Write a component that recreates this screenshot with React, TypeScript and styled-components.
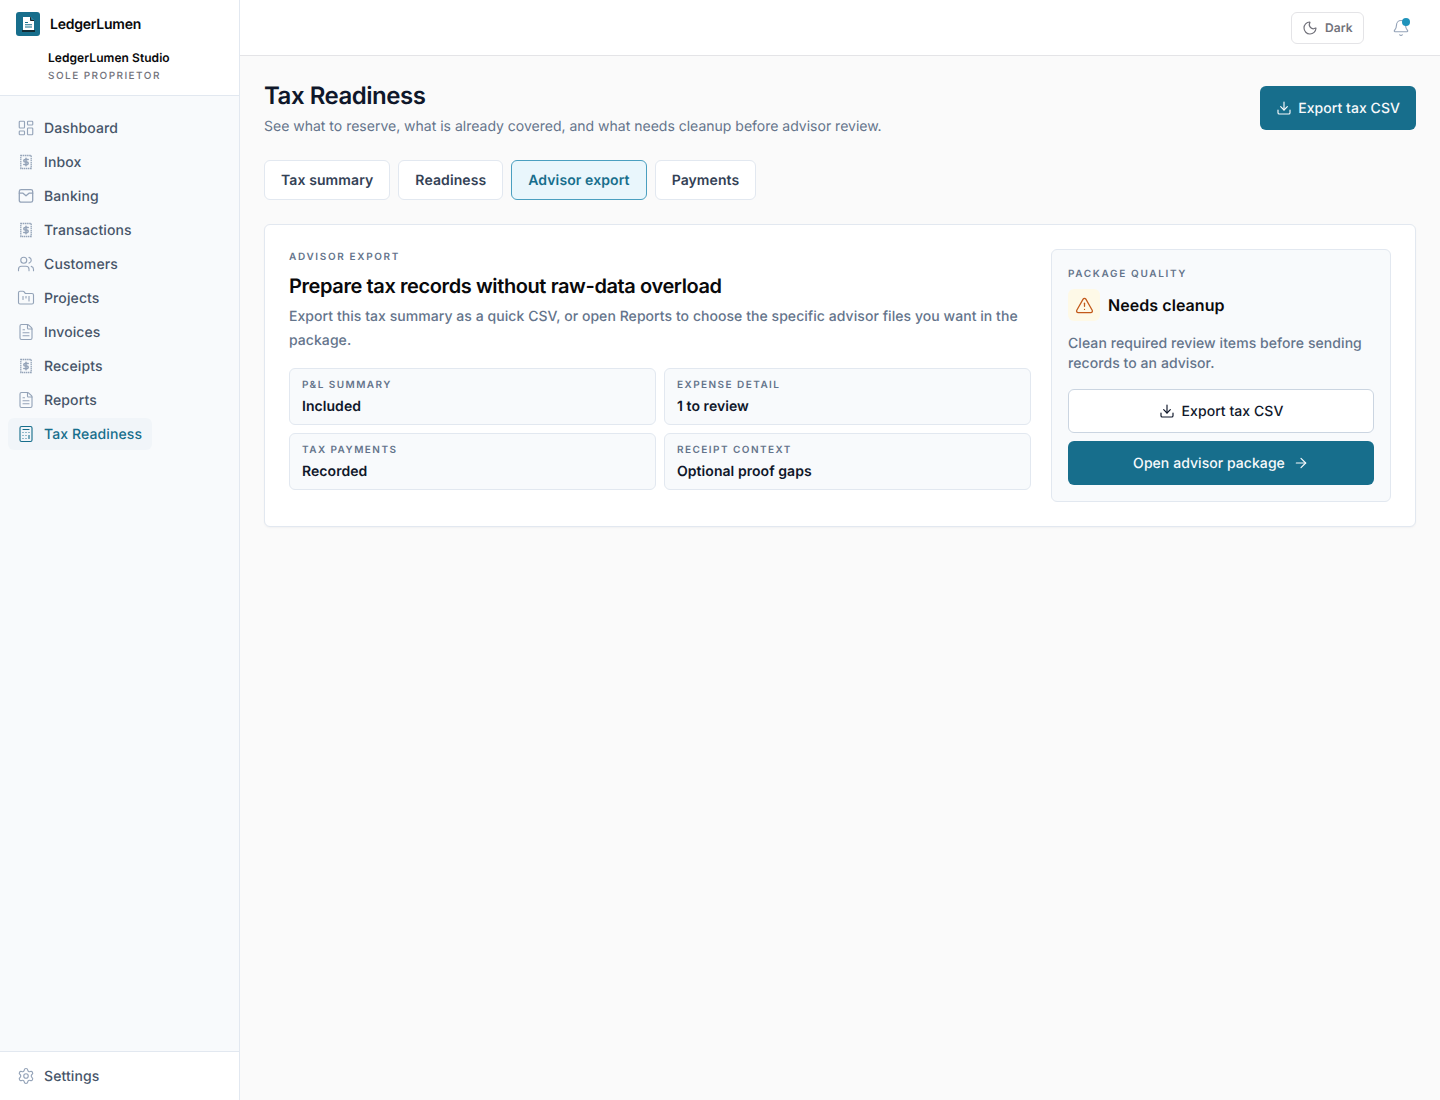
import React from "react";
import styled, { createGlobalStyle } from "styled-components";
import {
  ArrowRight,
  Bell,
  Calculator,
  Download,
  FileText,
  FolderKanban,
  LayoutDashboard,
  Moon,
  Settings,
  TriangleAlert,
  Users,
} from "lucide-react";

const Global = createGlobalStyle`
  html, body { margin: 0; padding: 0; background: #fafafa; }
  body { font-family: Inter, "Liberation Sans", sans-serif; color: #0f172a; text-rendering: geometricPrecision; }
  * { box-sizing: border-box; }
  button { text-rendering: geometricPrecision; }
`;

const Shell = styled.div`
  display: flex;
  width: 100%;
  height: 1100px;
  overflow: hidden;
`;
const Sidebar = styled.aside`
  width: 240px;
  flex: none;
  display: flex;
  flex-direction: column;
  background: #f8fafc;
  border-right: 1px solid #e2e8f0;
`;
const SideHead = styled.div`
  height: 96px;
  padding: 12px 16px 0;
  background: #fff;
  border-bottom: 1px solid #e2e8f0;
`;
const Brand = styled.div`
  display: flex;
  align-items: center;
  gap: 10px;
  height: 24px;
  font-size: 14px;
  font-weight: 600;
  letter-spacing: -0.017em;
  color: #09090b;
`;
const Logo = styled.span`
  width: 24px;
  height: 24px;
  border-radius: 3px;
  background: #176e8c;
  display: flex;
  align-items: center;
  justify-content: center;
`;
const Studio = styled.div`
  margin: 14px 0 0 32px;
  font-size: 12px;
  line-height: 16px;
  font-weight: 600;
  letter-spacing: 0.005em;
  color: #09090b;
`;
const Role = styled.div`
  margin: 3px 0 0 32px;
  font-size: 10px;
  line-height: 14px;
  font-weight: 500;
  letter-spacing: 0.145em;
  color: #71717a;
`;
const Nav = styled.nav`
  flex: 1;
  padding: 16px 8px;
  display: flex;
  flex-direction: column;
  align-items: flex-start;
  gap: 2px;
`;
const NavItem = styled.a<{ $active?: boolean }>`
  height: 32px;
  padding: 0 10px 0 9px;
  display: inline-flex;
  align-items: center;
  gap: 9px;
  border-radius: 6px;
  font-size: 14px;
  font-weight: 500;
  letter-spacing: 0.008em;
  color: ${(p) => (p.$active ? "#176e8c" : "#475569")};
  background: ${(p) => (p.$active ? "#f1f5f9" : "transparent")};
  svg { color: ${(p) => (p.$active ? "#176e8c" : "#94a3b8")}; flex: none; }
`;
const SideFoot = styled.div`
  height: 49px;
  padding: 8px;
  background: #fff;
  border-top: 1px solid #e2e8f0;
`;
const Content = styled.div`
  flex: 1;
  min-width: 0;
  display: flex;
  flex-direction: column;
`;
const Topbar = styled.header`
  height: 56px;
  padding: 0 24px;
  flex: none;
  display: flex;
  align-items: center;
  justify-content: flex-end;
  gap: 22px;
  background: #fff;
  border-bottom: 1px solid #e4e4e7;
`;
const ThemeBtn = styled.button`
  height: 32px;
  width: 73px;
  padding: 0 0 0 10px;
  display: flex;
  align-items: center;
  gap: 7px;
  background: #fff;
  border: 1px solid #e4e4e7;
  border-radius: 6px;
  font: 600 12px Inter, sans-serif;
  letter-spacing: 0.01em;
  color: #71717a;
`;
const BellWrap = styled.span`
  position: relative;
  width: 30px;
  height: 32px;
  display: flex;
  align-items: center;
  justify-content: center;
  color: #94a3b8;
`;
const Dot = styled.span`
  position: absolute;
  top: 6px;
  right: 6px;
  width: 8px;
  height: 8px;
  border-radius: 50%;
  background: #1f93bb;
`;
const Main = styled.main`
  padding: 24px;
  flex: 1;
`;
const PageHead = styled.div`
  display: flex;
  justify-content: space-between;
  align-items: flex-start;
`;
const Title = styled.h1`
  margin: 0;
  font-size: 24px;
  line-height: 32px;
  font-weight: 600;
  letter-spacing: -0.02em;
  color: #0f172a;
`;
const Subtitle = styled.p`
  margin: 5px 0 0;
  font-size: 14px;
  line-height: 20px;
  color: #64748b;
`;
const PrimaryBtn = styled.button<{ $wide?: boolean }>`
  height: 44px;
  padding: 0 16px;
  width: ${(p) => (p.$wide ? "100%" : "auto")};
  margin-top: ${(p) => (p.$wide ? "0" : "6px")};
  display: flex;
  align-items: center;
  justify-content: center;
  gap: ${(p) => (p.$wide ? "8px" : "6px")};
  border: none;
  border-radius: 6px;
  background: #176e8c;
  color: #f8fafc;
  font: 500 14px Inter, sans-serif;
  letter-spacing: 0.004em;
`;
const OutlineBtn = styled.button`
  height: 44px;
  width: 100%;
  display: flex;
  align-items: center;
  justify-content: center;
  gap: 7px;
  border: 1px solid #cbd5e1;
  border-radius: 6px;
  background: #fff;
  color: #0f172a;
  font: 500 14px Inter, sans-serif;
  letter-spacing: 0.004em;
`;
const Tabs = styled.div`
  margin-top: 23px;
  display: flex;
  gap: 8px;
`;
const Tab = styled.button<{ $active?: boolean }>`
  height: 40px;
  padding: 0 16px;
  border-radius: 6px;
  border: 1px solid ${(p) => (p.$active ? "#4a9fc0" : "#e2e8f0")};
  background: ${(p) => (p.$active ? "#e9f6fc" : "#fff")};
  color: ${(p) => (p.$active ? "#176e8c" : "#334155")};
  font: 600 14px Inter, sans-serif;
  letter-spacing: 0.007em;
`;
const Card = styled.section`
  margin-top: 24px;
  padding: 24px;
  display: flex;
  gap: 20px;
  background: #fff;
  border: 1px solid #e2e8f0;
  border-radius: 6px;
  box-shadow: 0 1px 2px rgba(15, 23, 42, 0.04);
`;
const Left = styled.div`
  flex: 1;
  min-width: 0;
`;
const Eyebrow = styled.div`
  padding-top: 2px;
  font-size: 10px;
  line-height: 12px;
  font-weight: 600;
  letter-spacing: 0.165em;
  color: #64748b;
`;
const FactLabel = styled(Eyebrow)`
  padding-top: 0;
  line-height: 14px;
  letter-spacing: 0.145em;
`;
const Heading = styled.h2`
  margin: 9px 0 0;
  font-size: 20px;
  line-height: 28px;
  font-weight: 600;
  letter-spacing: -0.02em;
  color: #09090b;
`;
const Lead = styled.p`
  margin: 5px 0 0;
  font-size: 14px;
  line-height: 24px;
  font-weight: 500;
  letter-spacing: 0.004em;
  color: #64748b;
`;
const Facts = styled.div`
  margin-top: 15px;
  display: grid;
  grid-template-columns: 1fr 1fr;
  gap: 8px;
`;
const Fact = styled.div`
  height: 57px;
  padding: 9px 12px 0;
  background: #f8fafc;
  border: 1px solid #e2e8f0;
  border-radius: 6px;
`;
const FactValue = styled.div`
  margin-top: 5px;
  font-size: 14px;
  line-height: 20px;
  font-weight: 600;
  letter-spacing: 0.004em;
  color: #0f172a;
`;
const Quality = styled.aside`
  width: 340px;
  flex: none;
  padding: 16px;
  background: #f8fafc;
  border: 1px solid #e2e8f0;
  border-radius: 6px;
`;
const StatusRow = styled.div`
  margin-top: 9px;
  display: flex;
  align-items: center;
  gap: 8px;
`;
const WarnBox = styled.span`
  width: 32px;
  height: 32px;
  border-radius: 6px;
  background: #fef9e7;
  color: #c2591a;
  display: flex;
  align-items: center;
  justify-content: center;
`;
const StatusText = styled.span`
  font-size: 16px;
  line-height: 24px;
  font-weight: 600;
  letter-spacing: 0.004em;
  color: #09090b;
`;
const QualityText = styled.p`
  margin: 13px 0 0;
  font-size: 14px;
  line-height: 20px;
  font-weight: 500;
  letter-spacing: 0.005em;
  color: #64748b;
`;
const Actions = styled.div`
  margin-top: 15px;
  display: flex;
  flex-direction: column;
  gap: 8px;
`;

const ReceiptDollar = ({ size = 18 }: { size?: number }) => (
  <svg width={size} height={size} viewBox="0 0 18 18" fill="none" stroke="currentColor" strokeWidth="1.3">
    <path d="M3.8 2.5h10.4v13H3.8z" strokeDasharray="1.5 0.6" />
    <path d="M11.2 6.4H8.1a1.3 1.3 0 0 0 0 2.6h1.8a1.3 1.3 0 0 1 0 2.6H6.8M9 5.2v7.6" strokeWidth="1.5" strokeLinecap="round" />
  </svg>
);
const Tray = ({ size = 18 }: { size?: number }) => (
  <svg width={size} height={size} viewBox="0 0 18 18" fill="none" stroke="currentColor" strokeWidth="1.3" strokeLinecap="round" strokeLinejoin="round">
    <rect x="2.3" y="2.6" width="13.4" height="12.6" rx="1.8" />
    <path d="M2.3 6.2H6L9 8.8l3-2.6h3.7" />
  </svg>
);
const LogoMark = () => (
  <svg width="14" height="16" viewBox="0 0 14 16">
    <path d="M2 1h7.5L13 4.5V14H2z" fill="#fff" />
    <path d="M9.5 1v3.5H13z" fill="#176e8c" />
    <path d="M9.5 1.2v3.3H13" fill="none" stroke="#111" strokeWidth="0.9" />
    <path d="M4 6.5h3M4 8.8h7M4 11h7" stroke="#176e8c" strokeWidth="1.1" />
    <path d="M1 15h13" stroke="#111" strokeWidth="1.4" />
  </svg>
);

const items: [string, React.ReactNode][] = [
  ["Dashboard", <LayoutDashboard size={18} strokeWidth={1.5} />],
  ["Inbox", <ReceiptDollar />],
  ["Banking", <Tray />],
  ["Transactions", <ReceiptDollar />],
  ["Customers", <Users size={18} strokeWidth={1.5} />],
  ["Projects", <FolderKanban size={18} strokeWidth={1.5} />],
  ["Invoices", <FileText size={18} strokeWidth={1.5} />],
  ["Receipts", <ReceiptDollar />],
  ["Reports", <FileText size={18} strokeWidth={1.5} />],
];

const facts = [
  ["P&L SUMMARY", "Included"],
  ["EXPENSE DETAIL", "1 to review"],
  ["TAX PAYMENTS", "Recorded"],
  ["RECEIPT CONTEXT", "Optional proof gaps"],
];

export default function App() {
  return (
    <Shell>
      <Global />
      <Sidebar>
        <SideHead>
          <Brand>
            <Logo><LogoMark /></Logo>
            LedgerLumen
          </Brand>
          <Studio>LedgerLumen Studio</Studio>
          <Role>SOLE PROPRIETOR</Role>
        </SideHead>
        <Nav>
          {items.map(([label, icon]) => (
            <NavItem key={label}>{icon}{label}</NavItem>
          ))}
          <NavItem $active><Calculator size={18} strokeWidth={1.5} />Tax Readiness</NavItem>
        </Nav>
        <SideFoot>
          <NavItem><Settings size={18} strokeWidth={1.5} />Settings</NavItem>
        </SideFoot>
      </Sidebar>
      <Content>
        <Topbar>
          <ThemeBtn><Moon size={16} strokeWidth={1.75} />Dark</ThemeBtn>
          <BellWrap><Bell size={18} strokeWidth={1.5} /><Dot /></BellWrap>
        </Topbar>
        <Main>
          <PageHead>
            <div>
              <Title>Tax Readiness</Title>
              <Subtitle>See what to reserve, what is already covered, and what needs cleanup before advisor review.</Subtitle>
            </div>
            <PrimaryBtn><Download size={16} strokeWidth={1.75} />Export tax CSV</PrimaryBtn>
          </PageHead>
          <Tabs>
            <Tab>Tax summary</Tab>
            <Tab>Readiness</Tab>
            <Tab $active>Advisor export</Tab>
            <Tab>Payments</Tab>
          </Tabs>
          <Card>
            <Left>
              <Eyebrow>ADVISOR EXPORT</Eyebrow>
              <Heading>Prepare tax records without raw-data overload</Heading>
              <Lead>Export this tax summary as a quick CSV, or open Reports to choose the specific advisor files you want in the package.</Lead>
              <Facts>
                {facts.map(([k, v]) => (
                  <Fact key={k}>
                    <FactLabel>{k}</FactLabel>
                    <FactValue>{v}</FactValue>
                  </Fact>
                ))}
              </Facts>
            </Left>
            <Quality>
              <Eyebrow>PACKAGE QUALITY</Eyebrow>
              <StatusRow>
                <WarnBox><TriangleAlert size={19} strokeWidth={1.6} /></WarnBox>
                <StatusText>Needs cleanup</StatusText>
              </StatusRow>
              <QualityText>Clean required review items before sending records to an advisor.</QualityText>
              <Actions>
                <OutlineBtn><Download size={16} strokeWidth={1.75} />Export tax CSV</OutlineBtn>
                <PrimaryBtn $wide>Open advisor package<ArrowRight size={16} strokeWidth={1.75} /></PrimaryBtn>
              </Actions>
            </Quality>
          </Card>
        </Main>
      </Content>
    </Shell>
  );
}
